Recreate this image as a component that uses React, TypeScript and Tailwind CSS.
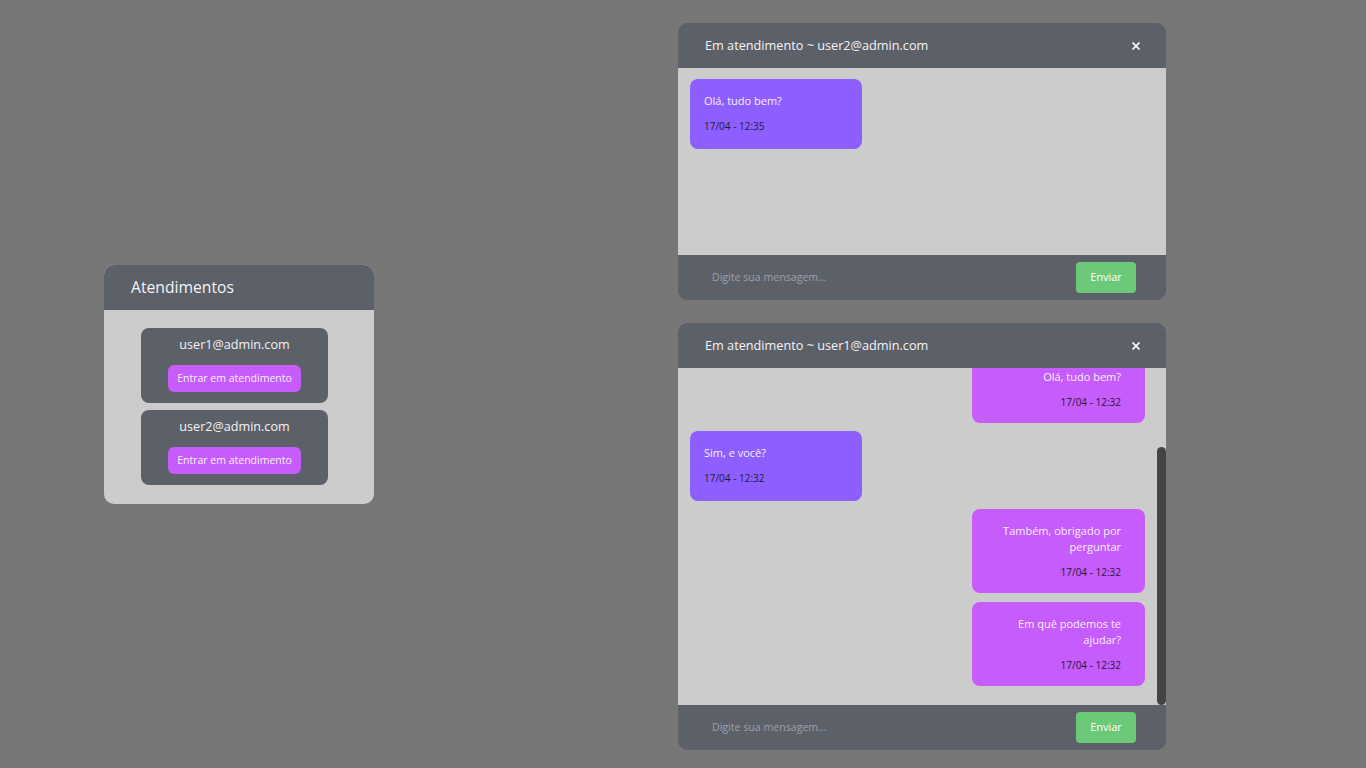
import React from "react";
import { X } from "lucide-react";

const font = { fontFamily: '"Open Sans", "Noto Sans", sans-serif' };

type Msg = { text: string; time: string; mine: boolean };

function Bubble({ m, last }: { m: Msg; last?: boolean }) {
  if (m.mine) {
    return (
      <div className={`self-end w-[173px] rounded-[8px] bg-[#c55cfb] pl-[14px] pr-[24px] pt-[14px] pb-[13px] text-right ${last ? "mt-[1px]" : ""}`}>
        <div className="text-[11px] leading-[16px] text-[#f6efff]">{m.text}</div>
        <div className="mt-[10px] text-[10px] leading-[15px] text-[#2a1838]">{m.time}</div>
      </div>
    );
  }
  return (
    <div className="self-start w-[172px] rounded-[8px] bg-[#8d5fff] pl-[14px] pr-[14px] pt-[14px] pb-[15px]">
      <div className="text-[11px] leading-[16px] text-[#f6efff]">{m.text}</div>
      <div className="mt-[10px] text-[10px] leading-[15px] text-[#221a3a]">{m.time}</div>
    </div>
  );
}

function Chat({ user, msgs, height, bottom, scroll }: { user: string; msgs: Msg[]; height: string; bottom?: boolean; scroll?: boolean }) {
  return (
    <div className="w-[488px] rounded-[10px] overflow-hidden flex flex-col bg-[#5c6069]">
      <div className="h-[45px] flex items-center justify-between pl-[27px] pr-[24px] bg-[#5c6069]">
        <span className="text-[12.7px] text-[#f4f4f6]">Em atendimento ~ {user}</span>
        <X size={12} strokeWidth={3.5} className="text-white" />
      </div>
      <div className={`relative bg-[#cccccc] ${height} overflow-hidden flex flex-col ${bottom ? "justify-end" : "justify-start"}`}>
        <div className="flex flex-col gap-[8px] pt-[11px] pl-[12px] pr-[21px] pb-[19px]">
          {msgs.map((m, i) => (
            <Bubble key={i} m={m} last={i === msgs.length - 1 && msgs.length > 1} />
          ))}
        </div>
        {scroll && (
          <div className="absolute right-0 bottom-0 w-[9px] h-[258px] rounded-full bg-[#444444]" />
        )}
      </div>
      <div className="h-[45px] flex items-center justify-between pl-[34px] pr-[30px] bg-[#5c6069]">
        <input
          className="bg-transparent outline-none text-[10.6px] text-white placeholder:text-[#9da1a9] w-[300px]"
          placeholder="Digite sua mensagem..."
          style={font}
        />
        <button className="w-[60px] h-[31px] rounded-[4px] bg-[#6bc977] text-[11px] text-white" style={font}>
          Enviar
        </button>
      </div>
    </div>
  );
}

export default function App() {
  const chat2: Msg[] = [
    { text: "Olá, tudo bem?", time: "17/04 - 12:32", mine: true },
    { text: "Sim, e você?", time: "17/04 - 12:32", mine: false },
    { text: "Também, obrigado por perguntar", time: "17/04 - 12:32", mine: true },
    { text: "Em quê podemos te ajudar?", time: "17/04 - 12:32", mine: true },
  ];
  return (
    <div className="w-[1366px] h-[768px] bg-[#777777] flex items-start" style={font}>
      <div className="pl-[104px] pt-[265px]">
        <div className="w-[270px] rounded-[10px] overflow-hidden bg-[#cccccc]">
          <div className="h-[45px] bg-[#5c6069] flex items-center pl-[27px]">
            <span className="text-[15.7px] text-[#f4f4f6]">Atendimentos</span>
          </div>
          <div className="flex flex-col gap-[7px] pl-[37px] pt-[18px] pb-[19px]">
            {["user1@admin.com", "user2@admin.com"].map((u) => (
              <div key={u} className="w-[187px] rounded-[8px] bg-[#5c6069] flex flex-col items-center pt-[7px] pb-[11px]">
                <span className="text-[12.6px] leading-[20px] text-[#f4f4f6]">{u}</span>
                <button className="mt-[10px] w-[133px] h-[27px] rounded-[6px] bg-[#c55cfb] text-[10.5px] text-[#f8f0ff]" style={font}>
                  Entrar em atendimento
                </button>
              </div>
            ))}
          </div>
        </div>
      </div>
      <div className="ml-[304px] pt-[23px] flex flex-col gap-[23px]">
        <Chat
          user="user2@admin.com"
          height="h-[187px]"
          msgs={[{ text: "Olá, tudo bem?", time: "17/04 - 12:35", mine: false }]}
        />
        <Chat user="user1@admin.com" height="h-[337px]" msgs={chat2} bottom scroll />
      </div>
    </div>
  );
}
